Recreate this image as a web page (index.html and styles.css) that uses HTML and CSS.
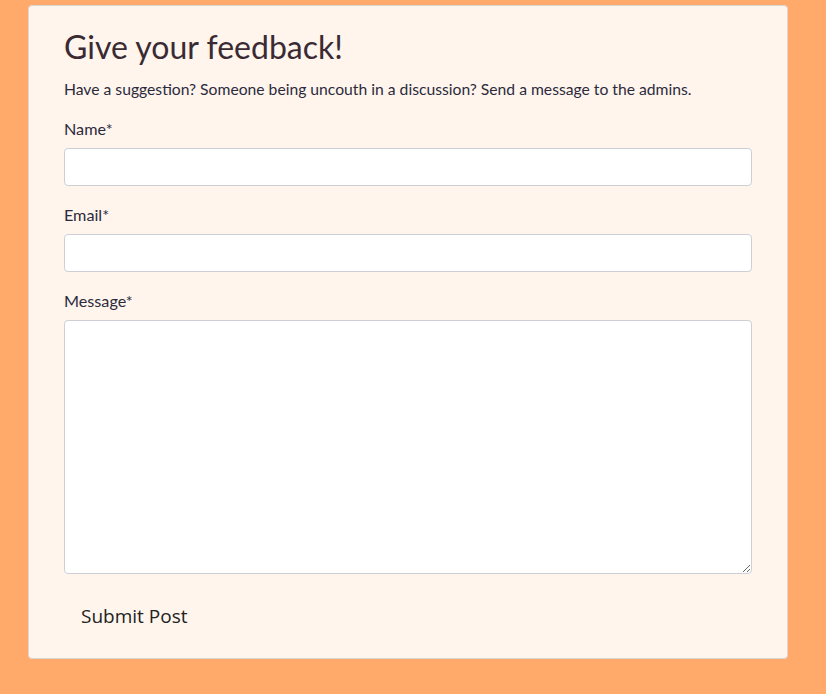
FILE: index.html
```html
<!DOCTYPE html>
<html>
<head>
<meta charset="utf-8">
<link rel="stylesheet" href="styles.css">
</head>
<body>
<div class="page">
  <form class="card">
    <h1 class="title">Give your feedback!</h1>
    <p class="intro">Have a suggestion? Someone being uncouth in a discussion? Send a message to the admins.</p>
    <label class="label" for="name">Name*</label>
    <input class="field" id="name" type="text">
    <label class="label" for="email">Email*</label>
    <input class="field" id="email" type="email">
    <label class="label" for="msg">Message*</label>
    <textarea class="field area" id="msg"></textarea>
    <button class="submit" type="button">Submit Post</button>
  </form>
</div>
</body>
</html>
```
FILE: styles.css
```css
html, body {
  margin: 0;
  padding: 0;
  background: #ffaa6b;
  height: 100%;
}
.page {
  padding: 5px 0 0 28px;
}
.card {
  box-sizing: border-box;
  width: 760px;
  height: 654px;
  background: #fff5ec;
  border: 1px solid #dcd6d0;
  border-radius: 4px;
  padding: 22px 35px 0 35px;
  display: flex;
  flex-direction: column;
  font-family: Lato, "Liberation Sans", sans-serif;
  color: #2b2a3d;
}
.title {
  margin: 0;
  font-size: 32px;
  font-weight: 400;
  line-height: 38px;
  color: #3a2a33;
}
.intro {
  margin: 13px 0 1px 0;
  font-size: 15.7px;
  line-height: 20px;
}
.label {
  margin-top: 19px;
  font-size: 16.2px;
  line-height: 20px;
}
.field {
  box-sizing: border-box;
  margin-top: 9px;
  width: 688px;
  height: 38px;
  background: #fff;
  border: 1px solid #ccd0d6;
  border-radius: 4px;
  font: inherit;
}
.area {
  height: 254px;
  resize: both;
}
.submit {
  align-self: flex-start;
  margin-top: 20px;
  padding: 6px 17px;
  background: transparent;
  border: none;
  font-family: "Open Sans", "Noto Sans", sans-serif;
  font-size: 19px;
  line-height: 32px;
  color: #222;
}
```
